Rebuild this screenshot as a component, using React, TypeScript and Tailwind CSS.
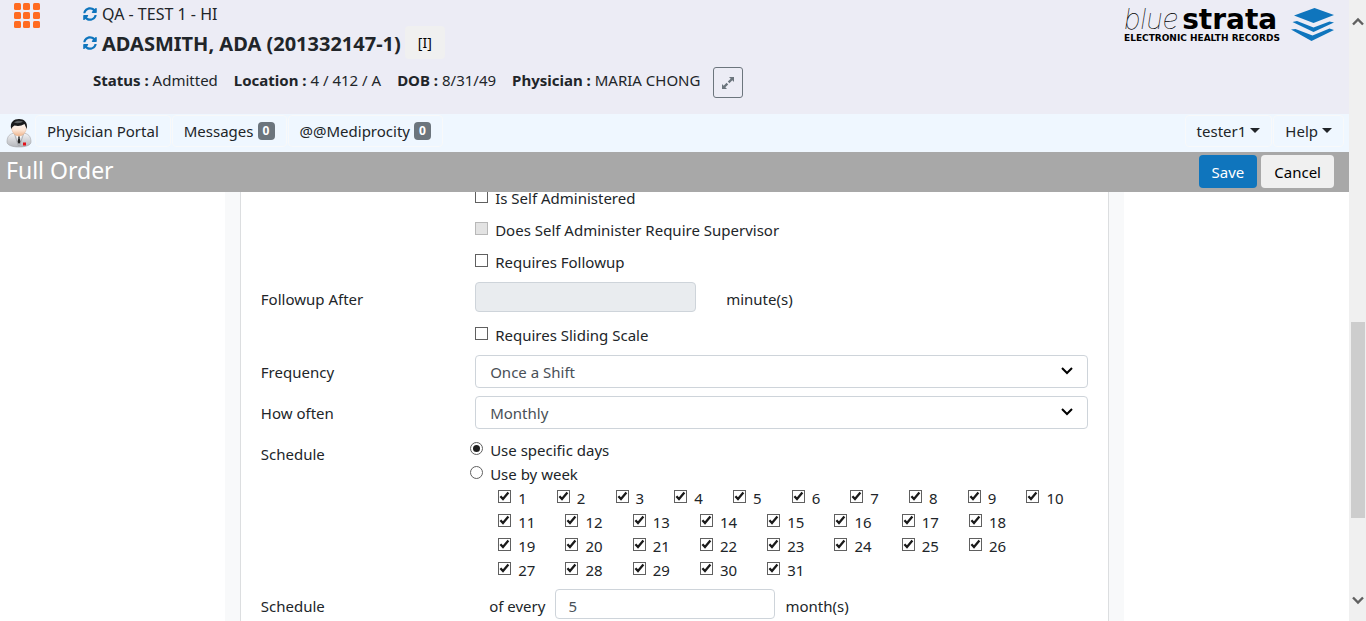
import { useState } from "react";
import type { ReactNode } from "react";
import { FaSyncAlt } from "react-icons/fa";

const DAY_ROWS: { columns: string; days: number[] }[] = [
  { columns: "grid-cols-10 w-[587px]", days: [1, 2, 3, 4, 5, 6, 7, 8, 9, 10] },
  { columns: "grid-cols-8 w-[538px]", days: [11, 12, 13, 14, 15, 16, 17, 18] },
  { columns: "grid-cols-8 w-[538px]", days: [19, 20, 21, 22, 23, 24, 25, 26] },
  { columns: "grid-cols-8 w-[538px]", days: [27, 28, 29, 30, 31] },
];

function Check({ label, checked = false, disabled = false }: { label: string; checked?: boolean; disabled?: boolean }) {
  const [on, setOn] = useState(checked);
  return (
    <label className="flex items-center gap-[7px] whitespace-nowrap">
      <span className="relative mb-[3px] size-[13px] shrink-0">
        <input
          type="checkbox"
          checked={on}
          disabled={disabled}
          onChange={() => setOn(!on)}
          className="block size-[13px] appearance-none border border-[#606060] bg-white disabled:border-[#b8b8b8] disabled:bg-[#e3e3e3]"
        />
        {on && (
          <svg viewBox="0 0 13 13" className="pointer-events-none absolute inset-0 size-[13px]">
            <path d="M2.400 6.200 5 9 10.400 2.600" fill="none" stroke="#1a1a1a" strokeWidth="2.300" />
          </svg>
        )}
      </span>
      {label}
    </label>
  );
}

function Radio({ label, checked, onSelect }: { label: string; checked: boolean; onSelect: () => void }) {
  return (
    <label className="-ml-[5px] flex h-6 items-center gap-[7px]">
      <span className="relative mb-[3px] size-[13px] shrink-0">
        <input
          type="radio"
          name="schedule-mode"
          checked={checked}
          onChange={onSelect}
          className="block size-[13px] appearance-none rounded-full border border-[#606060] bg-white"
        />
        {checked && <span className="pointer-events-none absolute inset-[3px] rounded-full bg-[#1f1f1f]" />}
      </span>
      {label}
    </label>
  );
}

function Row({ label, htmlFor, children }: { label?: string; htmlFor?: string; children: ReactNode }) {
  return (
    <div className="flex">
      <div className="w-1/4 shrink-0 px-[15px] pt-[9px] leading-6">
        {label && <label htmlFor={htmlFor}>{label}</label>}
      </div>
      <div className="w-3/4 px-[15px]">{children}</div>
    </div>
  );
}

function Select({ id, options }: { id: string; options: string[] }) {
  return (
    <div className="relative py-1">
      <select
        id={id}
        className="block h-[33px] w-full appearance-none rounded border border-[#ced4da] bg-white pl-[14px] pr-8 pt-0.5 text-[#495057]"
      >
        {options.map((o) => (
          <option key={o}>{o}</option>
        ))}
      </select>
      <svg viewBox="0 0 12 8" className="pointer-events-none absolute right-[15px] top-4 h-2 w-3">
        <path d="M1 1 6 6 11 1" fill="none" stroke="#000" strokeWidth="2" />
      </svg>
    </div>
  );
}

function Info({ name, value }: { name: string; value: string }) {
  return (
    <span>
      <b className="font-bold">{name} :</b> {value}
    </span>
  );
}

function NavItem({ children }: { children: ReactNode }) {
  return (
    <a href="#" className="flex h-8 items-center gap-1 rounded border border-[#f8f9fa] px-[11px]">
      {children}
    </a>
  );
}

function Badge({ children }: { children: ReactNode }) {
  return (
    <span className="flex h-[18px] w-[17px] items-center justify-center rounded bg-[#6c757d] text-xs font-bold text-white">
      {children}
    </span>
  );
}

function Caret() {
  return (
    <svg viewBox="0 0 10 5" className="mb-0.5 h-[5px] w-[10px]">
      <path d="M0 0h10L5 5z" fill="#212529" />
    </svg>
  );
}

function DoctorIcon() {
  return (
    <svg viewBox="0 0 26 30" className="h-[30px] w-[26px]">
      <defs>
        <linearGradient id="coat" x1="0" y1="0" x2="0" y2="1">
          <stop offset="0" stopColor="#f4f4f6" />
          <stop offset="1" stopColor="#b4b6bb" />
        </linearGradient>
        <linearGradient id="face" x1="0" y1="0" x2="0" y2="1">
          <stop offset="0" stopColor="#fff" />
          <stop offset="0.6" stopColor="#fde6d6" />
          <stop offset="1" stopColor="#eeb48c" />
        </linearGradient>
      </defs>
      <path d="M1 24C1 18 4 15.500 9 15h8c5 .5 8 3 8 9 0 3-5 5-12 5S1 27 1 24z" fill="url(#coat)" stroke="#a4a6aa" strokeWidth=".6" />
      <path d="M9 15.500 13 22l4-6.500z" fill="#fff" />
      <path d="M12 18.500h2l-.4 1.500 1 4-1.600 2-1.500-2 .9-4z" fill="#222" />
      <path d="M8.500 16 12.500 28M17.500 16 13.500 28" stroke="#9b9da2" strokeWidth=".7" />
      <path d="M5.500 8c0-3 3-5 7.500-5s7.500 2 7.500 5c0 6-3 10-7.500 10S5.500 14 5.500 8z" fill="url(#face)" stroke="#dca37e" strokeWidth=".4" />
      <path d="M5.200 11C3.500 4 8 1 13 1s9 3 7.800 10c-.8-1.500-1.300-3-2.300-5-3 2-6.500 2.500-10 1.500C7 8.500 6 9.500 5.200 11z" fill="#191b1c" />
      <path d="M8 4.500C10 2.500 14 2 17 3.500c-2 1.700-6 2.200-9 1z" fill="#5b5f61" />
      <path d="M17 24.500h3v3h-3z" fill="#e3121b" />
    </svg>
  );
}

function Brand() {
  return (
    <div className="flex items-start">
      <div className="w-[167px] whitespace-nowrap text-black">
        <div className="flex h-[25px] items-baseline gap-1 leading-[25px]">
          <span className="font-['Inter'] text-[28px] font-thin italic">blue</span>
          <span className="font-['DejaVu_Sans'] text-[28px] font-bold">strata</span>
        </div>
        <div className="font-['DejaVu_Sans'] text-[9px] font-bold leading-[13px]">ELECTRONIC HEALTH RECORDS</div>
      </div>
      <svg viewBox="0 0 44 33" className="mt-px h-[33px] w-11" fill="#0f75bd">
        <path d="M23.500 0 43 7 22.500 15 3 7.500z" />
        <path d="M1.500 14 6 13 22.500 19.500 38.500 13.500 43 14.500 22.500 24z" />
        <path d="M0 21.500 4.500 21 21.500 27.500 38.500 20.500 43 22 20.500 33z" />
      </svg>
    </div>
  );
}

function ScrollArrow({ down = false }: { down?: boolean }) {
  return (
    <svg viewBox="0 0 12 9" className="h-[9px] w-3">
      <path d={down ? "M1 1.500 6 6.500 11 1.500" : "M1 7.500 6 2.500 11 7.500"} fill="none" stroke="#606060" strokeWidth="2.400" />
    </svg>
  );
}

export default function App() {
  const [mode, setMode] = useState("days");
  return (
    <div className="flex h-screen overflow-hidden bg-white font-['Noto_Sans','Open_Sans',sans-serif] text-[15px] text-[#212529]">
      <div className="flex min-w-0 flex-1 flex-col">
        <header className="flex shrink-0 items-start bg-[#ececf5] pb-4 pr-[14px]">
          <button aria-label="Applications" className="ml-[14px] mt-[3px]">
            <svg viewBox="0 0 26 25" className="h-[25px] w-[26px]" fill="#ff6b21">
              {[0, 9, 18].map((y) =>
                [0, 9, 19].map((x) => <rect key={`${x}-${y}`} x={x} y={y} width="7" height="7" rx="1.500" />)
              )}
            </svg>
          </button>
          <div className="ml-[43px] flex-1 pt-0.5">
            <div className="flex h-6 items-center gap-[5px]">
              <FaSyncAlt className="size-[14px] text-[#0f75bd]" />
              <span className="text-base">QA - TEST 1 - HI</span>
            </div>
            <div className="flex h-[33px] items-center">
              <FaSyncAlt className="mr-[5px] size-[14px] text-[#0f75bd]" />
              <h1 className="pt-0.5 text-xl font-bold">ADASMITH, ADA (201332147-1)</h1>
              <button className="ml-1 h-[33px] rounded bg-[#f0f0f0] px-[13px] text-sm text-black">[I]</button>
            </div>
            <div className="ml-[10px] mt-2 flex h-[31px] items-center gap-[13px]">
              <div className="flex gap-4 pb-1">
                <Info name="Status" value="Admitted" />
                <Info name="Location" value="4 / 412 / A" />
                <Info name="DOB" value="8/31/49" />
                <Info name="Physician" value="MARIA CHONG" />
              </div>
              <button
                aria-label="Expand"
                className="flex h-[31px] w-[30px] items-center justify-center rounded-[3px] border border-[#6c757d]"
              >
                <svg viewBox="0 0 12 12" className="size-3" fill="#6c757d">
                  <path d="M7 0h5v5L10.300 3.300 7.400 6.200 5.800 4.600 8.700 1.700zM5 12H0V7l1.700 1.700L4.600 5.800 6.200 7.400 3.300 10.300z" />
                </svg>
              </button>
            </div>
          </div>
          <div className="pt-[7px]">
            <Brand />
          </div>
        </header>

        <nav className="flex h-[38px] shrink-0 items-start gap-px bg-[#eff7ff] pl-[6px] pr-[5px] pt-px">
          <span className="mr-0.5 pt-[3px]">
            <DoctorIcon />
          </span>
          <NavItem>Physician Portal</NavItem>
          <NavItem>
            Messages <Badge>0</Badge>
          </NavItem>
          <NavItem>
            @@Mediprocity <Badge>0</Badge>
          </NavItem>
          <span className="flex-1" />
          <NavItem>
            tester1 <Caret />
          </NavItem>
          <NavItem>
            Help <Caret />
          </NavItem>
        </nav>

        <div className="flex h-10 shrink-0 items-start justify-between bg-[#a8a8a8] pl-[6px] pr-[15px]">
          <h2 className="text-[23px] leading-9 text-white">Full Order</h2>
          <div className="flex gap-1 pt-[3px]">
            <button className="h-[33px] rounded bg-[#0f75bd] px-[13px] pt-px text-white">Save</button>
            <button className="h-[33px] rounded bg-[#f0f0f0] px-[13px] pt-px text-black">Cancel</button>
          </div>
        </div>

        <main className="flex min-h-0 flex-1 justify-center overflow-hidden">
          <div className="w-2/3 self-stretch bg-[#f8f9fa] px-[15px]">
            <form className="flow-root min-h-full border-x border-[#dcdee0] bg-white px-[5px]">
              <div className="-mt-[10px] flex flex-col">
                <Row>
                  <div className="grid auto-rows-[32px] items-center">
                    <Check label="Is Self Administered" />
                    <Check label="Does Self Administer Require Supervisor" disabled />
                    <Check label="Requires Followup" />
                  </div>
                </Row>
                <Row label="Followup After" htmlFor="followup">
                  <div className="flex h-[41px] items-start gap-[30px] pt-1">
                    <input
                      id="followup"
                      disabled
                      className="h-[30px] w-[221px] rounded border border-[#ced4da] bg-[#e9ecef] px-3"
                    />
                    <span className="pt-[5px] leading-6">minute(s)</span>
                  </div>
                </Row>
                <Row>
                  <div className="grid auto-rows-[32px] items-center">
                    <Check label="Requires Sliding Scale" />
                  </div>
                </Row>
                <Row label="Frequency" htmlFor="frequency">
                  <Select id="frequency" options={["Once a Shift"]} />
                </Row>
                <Row label="How often" htmlFor="how-often">
                  <Select id="how-often" options={["Monthly"]} />
                </Row>
                <Row label="Schedule">
                  <div className="pb-[3px] pt-[5px]">
                    <Radio label="Use specific days" checked={mode === "days"} onSelect={() => setMode("days")} />
                    <Radio label="Use by week" checked={mode === "week"} onSelect={() => setMode("week")} />
                    <div className="pl-[23px]">
                      {DAY_ROWS.map((row) => (
                        <div key={row.days[0]} className={`grid h-6 items-center ${row.columns}`}>
                          {row.days.map((d) => (
                            <Check key={d} label={String(d)} checked />
                          ))}
                        </div>
                      ))}
                    </div>
                  </div>
                </Row>
                <Row label="Schedule" htmlFor="every">
                  <div className="flex items-start gap-[10px] pl-[14px] pt-1">
                    <span className="pt-[5px] leading-6">of every</span>
                    <input
                      id="every"
                      defaultValue="5"
                      className="h-[30px] w-[220px] rounded border border-[#ced4da] bg-white px-3 pt-[3px] text-[#495057]"
                    />
                    <span className="pt-[5px] leading-6">month(s)</span>
                  </div>
                </Row>
              </div>
            </form>
          </div>
        </main>
      </div>

      <div aria-hidden="true" className="flex w-[17px] shrink-0 flex-col items-center bg-[#f0f0f0] pb-4 pt-[17px]">
        <ScrollArrow />
        <div className="flex w-full flex-1 flex-col pl-0.5 pr-px">
          <div className="grow-[296]" />
          <div className="grow-[196] bg-[#cdcdcd]" />
          <div className="grow-[78]" />
        </div>
        <ScrollArrow down />
      </div>
    </div>
  );
}
